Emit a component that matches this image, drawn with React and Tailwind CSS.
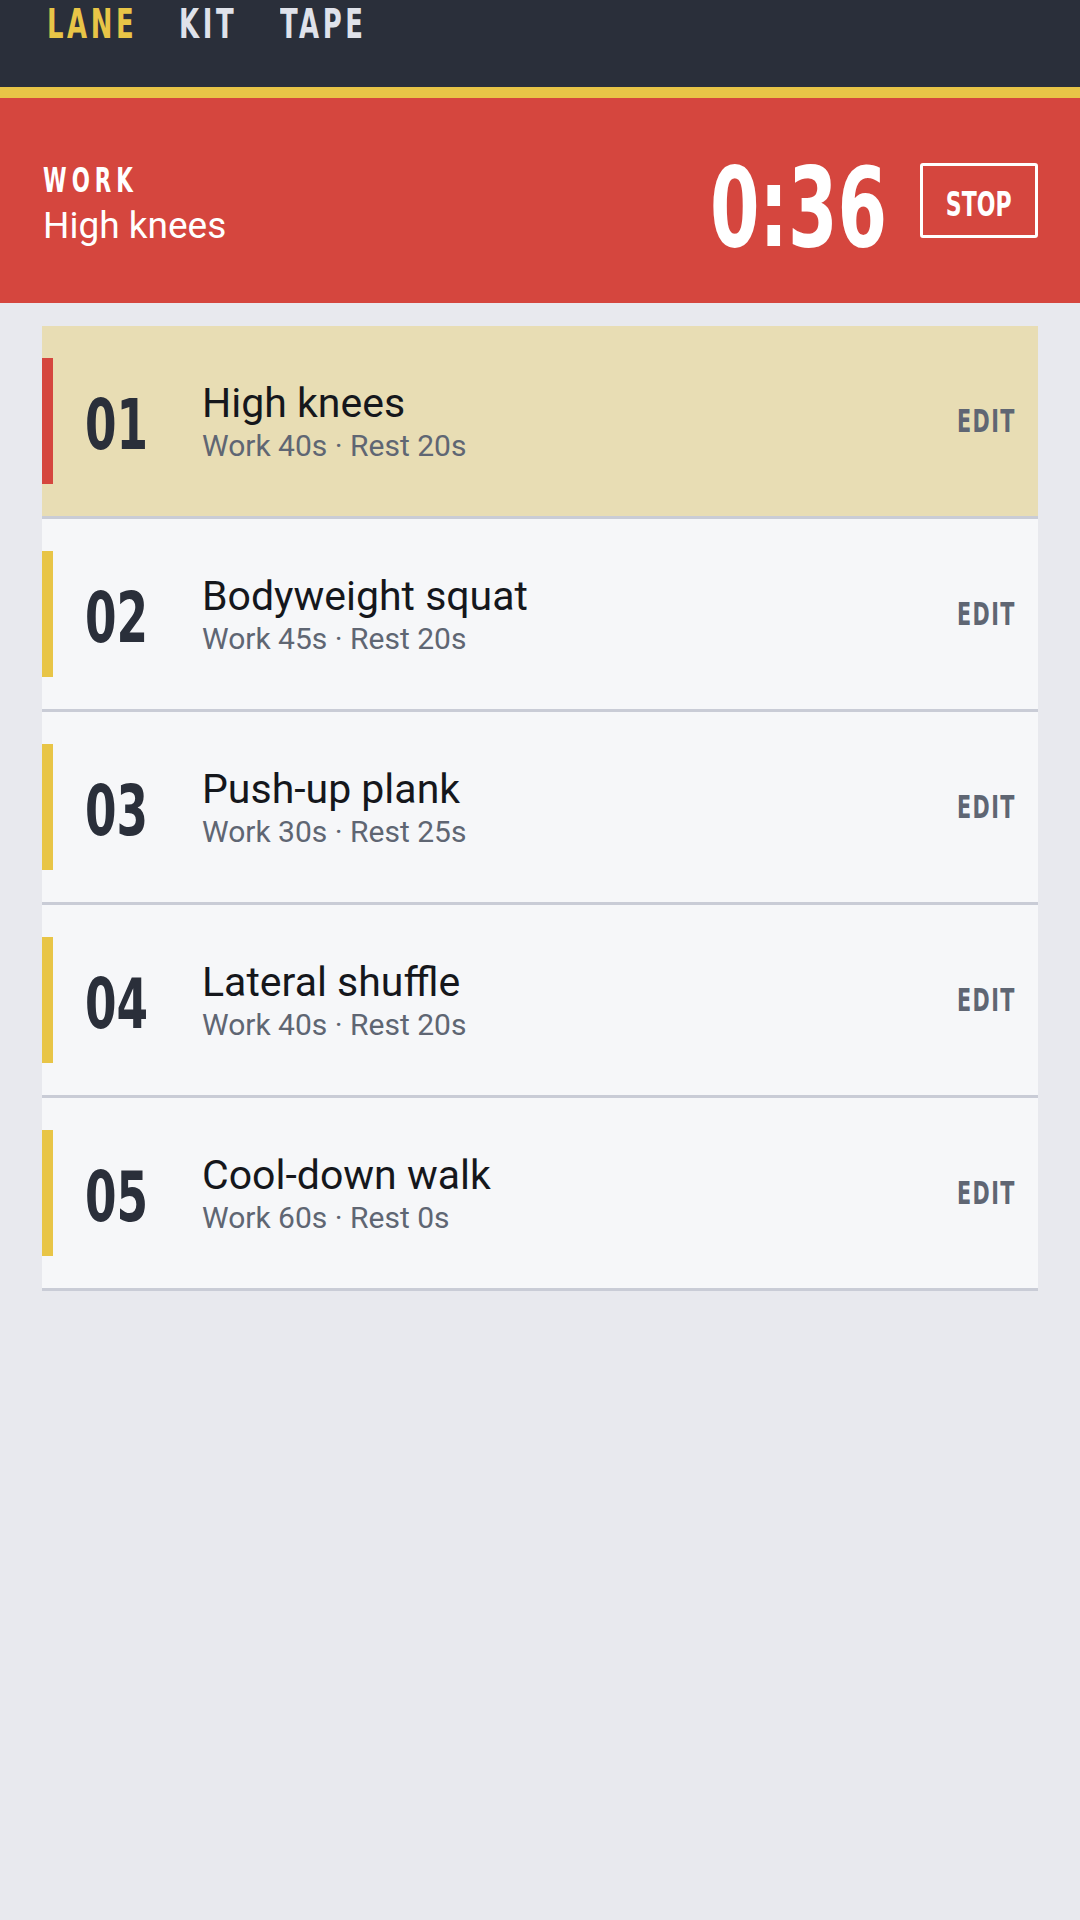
import React from 'react';

const condensed = "font-['DejaVu_Sans_Condensed','DejaVu_Sans',sans-serif]";
const body = "font-['Roboto','Liberation_Sans',sans-serif]";

// squeezes the condensed display face a little narrower
const squeeze = 'inline-block scale-x-[0.72]';

const steps = [
  { n: '01', name: 'High knees', work: 40, rest: 20 },
  { n: '02', name: 'Bodyweight squat', work: 45, rest: 20 },
  { n: '03', name: 'Push-up plank', work: 30, rest: 25 },
  { n: '04', name: 'Lateral shuffle', work: 40, rest: 20 },
  { n: '05', name: 'Cool-down walk', work: 60, rest: 0 },
];

function StepRow({ step, active }) {
  return (
    <div
      className={`flex h-[193px] items-center border-b-[3px] border-[#c9ccd6] pr-[22px] ${
        active ? 'bg-[#e8ddb4]' : 'bg-[#f6f7f9]'
      }`}
    >
      <div className={`h-[126px] w-[11px] shrink-0 ${active ? 'bg-[#d5463e]' : 'bg-[#e8c547]'}`} />
      <div className={`${condensed} mt-[8px] w-[149px] shrink-0 pl-[32px] text-[70px] font-bold leading-none text-[#2a2f3a]`}>
        <span className={`${squeeze} origin-left`}>{step.n}</span>
      </div>
      <div className={`${body} mt-[2px] flex-1`}>
        <div className="text-[41px] leading-[48px] text-[#15171c]">{step.name}</div>
        <div className="text-[30px] leading-[38px] text-[#5f6673]">
          Work {step.work}s · Rest {step.rest}s
        </div>
      </div>
      <button className={`${condensed} text-[32px] font-bold leading-none tracking-[2px] text-[#5f6673]`}>
        <span className={`${squeeze} origin-right`}>EDIT</span>
      </button>
    </div>
  );
}

export default function App() {
  return (
    <div className="min-h-[1920px] w-[1080px] bg-[#e8e9ee]">
      {/* top nav */}
      <div className="h-[87px] bg-[#2a2f3a]">
        <nav className={`${condensed} flex pl-[47px] pt-[4px] text-[40px] font-bold leading-none tracking-[5px]`}>
          <span className="w-[132px]">
            <span className={`${squeeze} origin-left text-[#e8c547]`}>LANE</span>
          </span>
          <span className="w-[101px]">
            <span className={`${squeeze} origin-left text-[#dfe2ea]`}>KIT</span>
          </span>
          <span>
            <span className={`${squeeze} origin-left text-[#dfe2ea]`}>TAPE</span>
          </span>
        </nav>
      </div>
      <div className="h-[11px] bg-[#e8c547]" />

      {/* current interval */}
      <div className="flex h-[205px] items-center bg-[#d5463e] pl-[43px] pr-[42px] text-white">
        <div className="mt-[6px] flex-1">
          <div className={`${condensed} mb-[2px] text-[33px] font-bold leading-[42px] tracking-[7px]`}>
            <span className={`${squeeze} origin-left`}>WORK</span>
          </div>
          <div className={`${body} text-[37px] leading-[44px]`}>High knees</div>
        </div>
        <div className={`${condensed} mt-[15px] text-[110px] font-bold leading-none`}>
          <span className={`${squeeze} origin-right`}>0:36</span>
        </div>
        <button
          className={`${condensed} ml-[33px] flex h-[75px] w-[118px] shrink-0 items-center justify-center rounded-[3px] border-[3px] border-white pt-[6px] text-[34px] font-bold leading-none`}
        >
          <span className={`${squeeze} origin-center`}>STOP</span>
        </button>
      </div>

      {/* step list */}
      <div className="mx-[42px] mt-[23px]">
        {steps.map((s, i) => (
          <StepRow key={s.n} step={s} active={i === 0} />
        ))}
      </div>
    </div>
  );
}
